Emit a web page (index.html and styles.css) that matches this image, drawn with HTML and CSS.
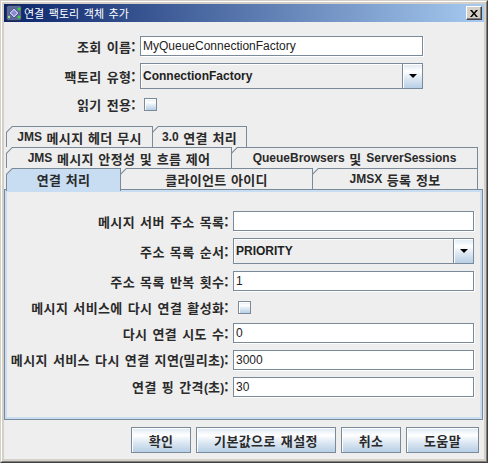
FILE: index.html
```html
<!DOCTYPE html>
<html lang="ko">
<head>
<meta charset="utf-8">
<title>연결 팩토리 객체 추가</title>
<link rel="stylesheet" href="styles.css">
</head>
<body>
<div class="window">
  <div class="frame">
    <div class="titlebar">
      <svg class="appicon" viewBox="0 0 16 16" width="16" height="16">
        <rect x="0.5" y="0.5" width="15" height="15" rx="2" fill="#5a6a9a" stroke="#2a3050"/>
        <path d="M3 8 L8 3 L13 8 L8 13 Z" fill="#c8c8f0" stroke="#404878" stroke-width="0.8"/>
        <path d="M5 8 L8 5 L11 8 L8 11 Z" fill="#8888d0"/>
        <circle cx="13" cy="4" r="1.6" fill="#40d040"/>
        <circle cx="13" cy="12" r="1.6" fill="#40d040"/>
        <circle cx="3" cy="12" r="1.2" fill="#a0e0a0"/>
      </svg>
      <span class="title">연결 팩토리 객체 추가</span>
      <div class="closebtn">
        <svg viewBox="0 0 8 7" width="8" height="7"><path d="M0 0 L2 0 L4 2.5 L6 0 L8 0 L5 3.5 L8 7 L6 7 L4 4.5 L2 7 L0 7 L3 3.5 Z" fill="#000"/></svg>
      </div>
    </div>
    <div class="content">
      <div class="topform">
        <span class="lbl">조회 이름:</span>
        <div class="field">MyQueueConnectionFactory</div>
        <span class="lbl">팩토리 유형:</span>
        <div class="combo"><span class="combo-text">ConnectionFactory</span><span class="combo-btn"><svg viewBox="0 0 8 4" width="8" height="4"><path d="M0 0 H8 L4 4 Z" fill="#000"/></svg></span></div>
        <span class="lbl">읽기 전용:</span>
        <div class="checkcell"><span class="check"></span></div>
      </div>

      <div class="tabs">
        <div class="tabrow r1">
          <div class="tab"><span><i class="lat">JMS</i> 메시지 헤더 무시</span></div>
          <div class="tab"><span><i class="lat">3.0</i> 연결 처리</span></div>
        </div>
        <div class="tabrow r2">
          <div class="tab"><span><i class="lat">JMS</i> 메시지 안정성 및 흐름 제어</span></div>
          <div class="tab"><span><i class="lat">QueueBrowsers</i> 및 <i class="lat">ServerSessions</i></span></div>
        </div>
        <div class="tabrow r3">
          <div class="tab selected"><span>연결 처리</span></div>
          <div class="tab"><span>클라이언트 아이디</span></div>
          <div class="tab"><span><i class="lat">JMSX</i> 등록 정보</span></div>
        </div>
      </div>

      <div class="panel">
        <div class="panelform">
          <span class="lbl">메시지 서버 주소 목록:</span>
          <div class="field"></div>
          <span class="lbl">주소 목록 순서:</span>
          <div class="combo"><span class="combo-text">PRIORITY</span><span class="combo-btn"><svg viewBox="0 0 8 4" width="8" height="4"><path d="M0 0 H8 L4 4 Z" fill="#000"/></svg></span></div>
          <span class="lbl">주소 목록 반복 횟수:</span>
          <div class="field">1</div>
          <span class="lbl">메시지 서비스에 다시 연결 활성화:</span>
          <div class="checkcell"><span class="check pad5"></span></div>
          <span class="lbl">다시 연결 시도 수:</span>
          <div class="field">0</div>
          <span class="lbl">메시지 서비스 다시 연결 지연<i class="lat">(</i>밀리초<i class="lat">)</i>:</span>
          <div class="field">3000</div>
          <span class="lbl">연결 핑 간격<i class="lat">(</i>초<i class="lat">)</i>:</span>
          <div class="field">30</div>
        </div>
      </div>

      <div class="buttons">
        <button class="btn w60">확인</button>
        <button class="btn w140">기본값으로 재설정</button>
        <button class="btn w60">취소</button>
        <button class="btn w73">도움말</button>
      </div>
    </div>
  </div>
</div>
</body>
</html>
```

FILE: styles.css
```css
html, body {
  margin: 0;
  padding: 0;
  background: #d4d0c8;
}

body {
  font-family: "Liberation Sans", "Noto Sans CJK KR", sans-serif;
  color: #333;
}

.window {
  width: 488px;
  height: 463px;
  box-sizing: border-box;
  border: 1px solid;
  border-color: #d4d0c8 #404040 #404040 #d4d0c8;
  background: #d4d0c8;
}

.frame {
  height: 100%;
  box-sizing: border-box;
  border: 1px solid;
  border-color: #ffffff #808080 #808080 #ffffff;
  padding: 2px;
  display: flex;
  flex-direction: column;
}

/* ---------- title bar ---------- */
.titlebar {
  flex: none;
  height: 18px;
  display: flex;
  align-items: center;
  padding: 0 2px;
  background: linear-gradient(to right, #0a246a, #a6caf0);
}

.appicon {
  flex: none;
  display: block;
  margin-right: 2px;
}

.title {
  flex: 1;
  color: #fff;
  font-family: "Noto Sans CJK KR", sans-serif;
  font-size: 11px;
  line-height: 1;
  word-spacing: 1.5px;
  white-space: nowrap;
}

.closebtn {
  flex: none;
  width: 16px;
  height: 14px;
  box-sizing: border-box;
  background: #d4d0c8;
  border: 1px solid;
  border-color: #ffffff #404040 #404040 #ffffff;
  box-shadow: inset -1px -1px 0 #808080;
  display: flex;
  align-items: center;
  justify-content: center;
}

.closebtn svg {
  display: block;
}

/* ---------- content ---------- */
.content {
  flex: 1;
  background: #eeeeee;
  display: flex;
  flex-direction: column;
  min-height: 0;
}

.lbl {
  font-weight: bold;
  font-size: 13px;
  line-height: 1;
  color: #2a2a2a;
  text-align: right;
  align-self: center;
  white-space: nowrap;
  letter-spacing: 0.4px;
  word-spacing: 1px;
  font-family: "Noto Sans CJK KR", sans-serif;
}

.lat {
  font-style: normal;
  font-family: "Liberation Sans", sans-serif;
  font-size: 12px;
  letter-spacing: 0;
}

.topform {
  display: grid;
  grid-template-columns: 132px 283px;
  grid-template-rows: 20px 26px 17px;
  column-gap: 4px;
  row-gap: 7px;
  margin-top: 14px;
}

.field {
  box-sizing: border-box;
  height: 100%;
  background: #fff;
  border: 1px solid #7a8a99;
  box-shadow: 1px 1px 0 #ffffff;
  font-size: 12px;
  color: #222;
  padding-left: 2px;
  display: flex;
  align-items: center;
  white-space: nowrap;
}

.combo {
  box-sizing: border-box;
  height: 100%;
  display: flex;
  border: 1px solid #7a8a99;
  background: #eeeeee;
}

.combo-text {
  flex: 1;
  display: flex;
  align-items: center;
  padding-left: 2px;
  font-size: 12px;
  font-weight: bold;
  color: #222;
  box-shadow: inset 1px 1px 0 #ffffff;
}

.combo-btn {
  flex: none;
  width: 19px;
  border-left: 1px solid #7a8a99;
  background: linear-gradient(#dde8f3, #ffffff 30%, #dde8f3 60%, #b8cfe5);
  box-shadow: inset 1px 1px 0 #ffffff;
  display: flex;
  align-items: center;
  justify-content: center;
}

.combo-btn svg {
  display: block;
}

.checkcell {
  display: flex;
  align-items: center;
}

.check {
  display: block;
  width: 13px;
  height: 13px;
  box-sizing: border-box;
  margin-left: 4px;
  border: 1px solid #7a8a99;
  background: linear-gradient(#dde8f3, #ffffff 30%, #dde8f3 60%, #b8cfe5);
  box-shadow: inset 1px 1px 0 #ffffff;
}

.check.pad5 {
  margin-left: 5px;
}

/* ---------- tabs ---------- */
.tabs {
  margin-top: 13px;
  padding-left: 2px;
  display: flex;
  flex-direction: column;
  position: relative;
  z-index: 1;
}

.tabrow {
  display: flex;
  align-items: flex-start;
  height: 21px;
}

.tab {
  flex: none;
  box-sizing: border-box;
  height: 21px;
  padding: 1px 1px 0 1px;
  margin-left: -1px;
  background: #7a8a99;
  clip-path: polygon(0 6px, 6px 0, 100% 0, 100% 100%, 0 100%);
}

.tab:first-child {
  margin-left: 0;
}

.tab > span {
  height: 100%;
  display: flex;
  align-items: center;
  justify-content: center;
  background: #eeeeee;
  clip-path: polygon(0 5.5px, 5.5px 0, 100% 0, 100% 100%, 0 100%);
  font-family: "Noto Sans CJK KR", sans-serif;
  font-weight: bold;
  font-size: 13px;
  line-height: 1;
  color: #2a2a2a;
  white-space: pre;
  letter-spacing: 0.3px;
  word-spacing: 0.7px;
}

.r1 .tab:nth-child(1) { width: 147px; }
.r1 .tab:nth-child(2) { width: 95px; }
.r2 .tab:nth-child(1) { width: 226px; }
.r2 .tab:nth-child(2) { width: 247px; }
.r3 .tab:nth-child(1) { width: 115px; }
.r3 .tab:nth-child(2) { width: 193px; }
.r3 .tab:nth-child(3) { width: 166px; }

.tab.selected {
  height: 23px;
}

.tab.selected > span {
  background: #c8ddf2;
  padding-bottom: 2px;
  box-sizing: border-box;
}

/* ---------- panel ---------- */
.panel {
  flex: none;
  box-sizing: border-box;
  height: 231px;
  margin-right: 1px;
  border: 1px solid #7a8a99;
  box-shadow: inset 0 0 0 2px #c8ddf2;
  padding: 21px 8px 0 3px;
}

.panelform {
  display: grid;
  grid-template-columns: 1fr 241px;
  grid-template-rows: 20px 26px 20px 18px 20px 20px 20px;
  column-gap: 4px;
  row-gap: 7px;
}

/* ---------- buttons ---------- */
.buttons {
  display: flex;
  justify-content: flex-end;
  gap: 5px;
  margin-top: 7px;
  padding-right: 5px;
}

.btn {
  height: 26px;
  box-sizing: border-box;
  margin: 0;
  padding: 0;
  border: 1px solid #7a8a99;
  border-radius: 0;
  background: linear-gradient(#dde8f3, #ffffff 30%, #dde8f3 60%, #b8cfe5);
  box-shadow: inset 1px 1px 0 #ffffff;
  font-family: "Noto Sans CJK KR", sans-serif;
  font-weight: bold;
  font-size: 13px;
  line-height: 1;
  color: #2a2a2a;
  white-space: nowrap;
  letter-spacing: 0.4px;
  word-spacing: 1px;
}

.w60 { width: 60px; }
.w73 { width: 73px; }
.w140 { width: 140px; }
```
